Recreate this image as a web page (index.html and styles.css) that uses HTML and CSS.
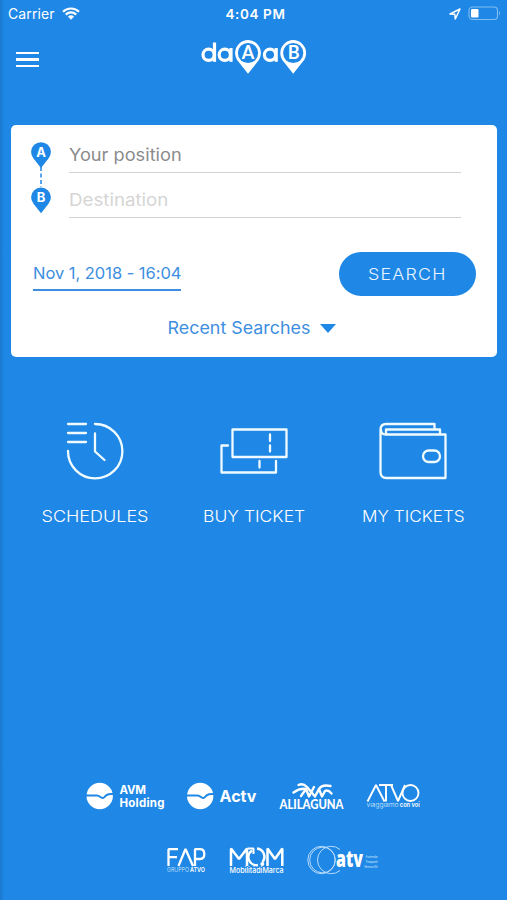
FILE: index.html
```html
<!DOCTYPE html>
<html lang="en">
<head>
    <meta charset="UTF-8">
    <title>daAaB</title>
    <link rel="stylesheet" href="styles.css">
</head>
<body>

<div class="status">
    <div class="carrier">
        <span>Carrier</span>
        <svg width="18" height="13" viewBox="0 0 18 13">
            <path d="M1 4.8 A11.3 11.3 0 0 1 17 4.8 M3.8 7.6 A7.4 7.4 0 0 1 14.2 7.6" fill="none" stroke="#fff" stroke-width="2.2"/>
            <path d="M5.9 9.6 A4.4 4.4 0 0 1 12.1 9.6 L9 12.8 Z" fill="#fff"/>
        </svg>
    </div>
    <span class="clock">4:04 PM</span>
    <div class="power">
        <svg width="12" height="12" viewBox="0 0 12 12">
            <path d="M1 6 L11 1 L6.3 11 L5.8 6.2 Z" fill="none" stroke="#fff" stroke-width="1.5" stroke-linejoin="round"/>
        </svg>
        <svg width="33" height="15" viewBox="0 0 33 15">
            <rect x="1" y="1" width="28.5" height="12.5" rx="3.5" fill="none" stroke="#82bdf2" stroke-width="1.1"/>
            <rect x="3" y="3" width="7.5" height="8.5" rx="1.2" fill="#fff"/>
            <path d="M31 5 Q33 7.2 31 9.5 Z" fill="#82bdf2"/>
        </svg>
    </div>
</div>

<div class="header">
    <div class="menu"><i></i><i></i><i></i></div>
    <svg class="brand" width="110" height="38" viewBox="200 38 110 38">
        <g fill="none" stroke="#fff" stroke-width="3.2">
            <circle cx="208.6" cy="54.8" r="5.6"/>
            <path d="M214.5 42.5 V61.8"/>
            <circle cx="224.8" cy="54.8" r="5.6"/>
            <path d="M231 48 V61.8"/>
            <circle cx="270" cy="54.8" r="5.6"/>
            <path d="M276.2 48 V61.8"/>
        </g>
        <path d="M248 73.7 L238.3 61.5 A12.9 12.9 0 1 1 257.7 61.5 Z" fill="#fff"/>
        <circle cx="248" cy="53" r="10.1" fill="#1f87e5"/>
        <path d="M293.2 73.7 L283.5 61.5 A12.9 12.9 0 1 1 302.9 61.5 Z" fill="#fff"/>
        <circle cx="293.2" cy="53" r="10.1" fill="#1f87e5"/>
        <text class="pin-big" x="248" y="59.4">A</text>
        <text class="pin-big" x="293.6" y="59.4">B</text>
    </svg>
</div>

<form class="search">
    <div class="route">
        <svg class="pins" width="22" height="74" viewBox="0 0 22 74">
            <path d="M11 26 V46" stroke="#1f87e5" stroke-width="1.5" stroke-dasharray="4 2.5"/>
            <path d="M11 27 L3.5 17.5 A9.9 9.9 0 1 1 18.5 17.5 Z" fill="#1f87e5"/>
            <path d="M11 72.3 L3.5 62.8 A9.9 9.9 0 1 1 18.5 62.8 Z" fill="#1f87e5"/>
            <text class="pin" x="11" y="15.7">A</text>
            <text class="pin" x="11" y="61.2">B</text>
        </svg>
        <div class="fields">
            <div class="field"><span class="wide">Your position</span></div>
            <div class="field empty"><span class="wide">Destination</span></div>
        </div>
    </div>
    <div class="when">
        <span class="date">Nov 1, 2018 - 16:04</span>
        <button class="btn" type="button"><span>SEARCH</span></button>
    </div>
    <div class="recent"><span>Recent Searches</span><i class="caret"></i></div>
</form>

<div class="actions">
    <div class="action">
        <svg width="60" height="60" viewBox="65 421 60 60">
            <path d="M68 424 H77 M68 433 H77 M68 442 H77 M77 424 H86 M77 433 H86 M77 442 H86"/>
            <path d="M95 424 A27.2 27.2 0 1 1 68 451 M95 433.5 V451.5 L104.5 460"/>
        </svg>
        <span>SCHEDULES</span>
    </div>
    <div class="action">
        <svg width="70" height="60" viewBox="219 421 70 60">
            <path d="M232.5 429.5 H286.5 V457 H232.5 Z M270 434.5 V441 M270 445.5 V451.5"/>
            <path d="M228 445.5 H221.5 V472.5 H276 V461 M259.5 461 V467.5"/>
        </svg>
        <span class="buy">BUY TICKET</span>
    </div>
    <div class="action">
        <svg width="70" height="60" viewBox="378 421 70 60">
            <path d="M434.5 429 V424 H386 Q380.5 424 380.5 430 V472 Q380.5 478 386.5 478 H445.5 V434.5 H386 Q381 434.5 381 430"/>
            <path d="M386 434 V429.5 H440 V434"/>
            <rect x="423" y="450.5" width="17" height="11.5" rx="5.7"/>
        </svg>
        <span class="mine">MY TICKETS</span>
    </div>
</div>

<div class="partners">
    <div class="line">
        <svg width="80" height="34" viewBox="86 780 80 34">
            <circle cx="99.7" cy="796" r="13.2" fill="#fff"/>
            <path d="M85 795.6 H97 C100.5 795.6 101 799.5 104 797.5 C107 793.5 110 793.8 114 794" fill="none" stroke="#1f87e5" stroke-width="2"/>
            <g class="avm">
                <text x="119.5" y="793.8" textLength="26.5">AVM</text>
                <text x="119.5" y="807" textLength="45">Holding</text>
            </g>
        </svg>
        <svg width="72" height="34" viewBox="186 780 72 34">
            <circle cx="200.2" cy="796" r="13.2" fill="#fff"/>
            <path d="M185.5 795.6 H197.5 C201 795.6 201.5 799.5 204.5 797.5 C207.5 793.5 210.5 793.8 214.5 794" fill="none" stroke="#1f87e5" stroke-width="2"/>
            <text class="actv" x="219.5" y="802.3" textLength="37" lengthAdjust="spacingAndGlyphs">Actv</text>
        </svg>
        <svg class="nudge" width="66" height="34" viewBox="279 780 66 34">
            <g fill="none" stroke="#fff" stroke-width="2.4" stroke-linecap="round" stroke-linejoin="round">
                <path d="M298.5 785 Q303 783 307 787 L315 796.5 L319 789 Q322 784 330.5 786"/>
                <path d="M293.5 792.5 Q300 788 306 789 L309 796.5 L314 787"/>
                <path d="M301 796 L306 789 M319 789 L322 796.5 L325 791 Q328 789.5 331.5 793.5"/>
            </g>
            <text class="alilaguna" x="279.5" y="808.8" textLength="64" lengthAdjust="spacingAndGlyphs">ALILAGUNA</text>
        </svg>
        <svg width="56" height="34" viewBox="365 780 56 34">
            <g fill="none" stroke="#fff" stroke-width="1.9" stroke-linejoin="bevel">
                <path d="M367.5 801.5 L376 785 L384.5 801.5 M379 785 H393 M386 785 V801.5 M391 785 L398 801 L405 785"/>
                <circle cx="410.5" cy="793" r="8"/>
            </g>
            <text class="tiny" x="366.5" y="807.4" textLength="32" lengthAdjust="spacingAndGlyphs">viaggiamo</text>
            <text class="tiny strong" x="399.8" y="807.4" textLength="20" lengthAdjust="spacingAndGlyphs">con voi</text>
        </svg>
    </div>
    <div class="line second">
        <svg width="42" height="34" viewBox="166 843 42 34">
            <path d="M178 849.2 H168.5 V866 M168.5 857.2 H177 M178.5 866 L185.5 849 L193 866 M195 866 V849.2 H200 Q204.3 849.2 204.3 854 Q204.3 859 200 859 H195" fill="none" stroke="#fff" stroke-width="2.3" stroke-linejoin="bevel"/>
            <text class="tiny" x="167" y="871.6" textLength="22" lengthAdjust="spacingAndGlyphs">GRUPPO</text>
            <text class="tiny strong" x="190" y="871.6" textLength="15" lengthAdjust="spacingAndGlyphs">ATVO</text>
        </svg>
        <svg width="56" height="34" viewBox="229 843 56 34">
            <g fill="none" stroke="#fff" stroke-width="2.5" stroke-linejoin="bevel">
                <path d="M231 866 V848.5 L239 859 L247 848.5 V866"/>
                <path d="M267.5 866 V848.5 L275 859 L282.3 848.5 V866"/>
                <path d="M252 850.5 A8 8 0 0 0 258 865 M257 848.5 A8.3 8.3 0 0 1 262.5 862"/>
                <path d="M247.5 848.5 H253.5 V854" stroke-width="2"/>
            </g>
            <circle cx="262.3" cy="864" r="2" fill="#fff"/>
            <text class="mobility" x="229.5" y="872.8" textLength="54" lengthAdjust="spacingAndGlyphs">MobilitàdiMarca</text>
        </svg>
        <svg class="nudge" width="73" height="34" viewBox="307 843 73 34">
            <g fill="none" stroke="#b8dcfb" stroke-width="1">
                <circle cx="321.5" cy="860" r="13.7"/>
                <circle cx="322.5" cy="860" r="12.8"/>
                <path d="M340 849.5 A13.7 13.7 0 1 0 340 870.5"/>
            </g>
            <text class="atv" x="336" y="867.3" textLength="27" lengthAdjust="spacingAndGlyphs">atv</text>
            <g class="micro">
                <text x="365.5" y="858" textLength="12">Azienda</text>
                <text x="365.5" y="862.8" textLength="12">Trasporti</text>
                <text x="364" y="867.6" textLength="13.5">Verona Srl</text>
            </g>
        </svg>
    </div>
</div>

</body>
</html>
```

FILE: styles.css
```css
* {
    box-sizing: border-box;
}

body {
    margin: 0;
    height: 900px;
    overflow: hidden;
    display: flex;
    flex-direction: column;
    background: linear-gradient(90deg, #1b78cf 0, #1f87e5 4px);
    color: #fff;
    font-family: Inter, "Open Sans", sans-serif;
}

svg {
    display: block;
    overflow: visible;
}

.status {
    display: grid;
    grid-template-columns: 1fr auto 1fr;
    align-items: center;
    height: 27px;
    padding: 0 6px 0 8px;
    font-size: 14px;
}

.carrier {
    display: flex;
    align-items: center;
    gap: 7px;
    letter-spacing: 0.1px;
}

.clock {
    font-weight: 600;
    font-size: 13.5px;
    letter-spacing: 0.6px;
    padding-left: 2px;
}

.power {
    display: flex;
    justify-content: flex-end;
    align-items: center;
    gap: 7px;
}

.header {
    display: grid;
    grid-template-columns: 184px 110px 1fr;
    height: 98px;
    padding: 11px 16px 0;
}

.menu {
    display: flex;
    flex-direction: column;
    gap: 4px;
    width: 23px;
    padding-top: 14px;
}

.menu i {
    height: 2.4px;
    background: #fff;
}

.pin-big {
    font: 700 18px Lato, sans-serif;
    text-anchor: middle;
    fill: #fff;
}

.search {
    height: 232px;
    margin: 0 10px 0 11px;
    padding: 16px 21px 0 19px;
    background: #fff;
    border-radius: 5px;
    color: #3d8ee0;
    font-size: 17px;
}

.route {
    display: flex;
    gap: 17px;
}

.pin {
    font: 700 13px Inter, sans-serif;
    text-anchor: middle;
    fill: #fff;
}

.fields {
    width: 392px;
}

.field {
    height: 32px;
    padding-top: 3px;
    line-height: 22px;
    border-bottom: 1px solid #d2d2d2;
    color: #8b8b8b;
}

.empty {
    height: 45px;
    padding-top: 16px;
    color: #d5d5d5;
}

/* the labels are a bit wider than the font */
.wide {
    display: inline-block;
    transform: scaleX(1.07);
    transform-origin: left;
}

.empty .wide {
    transform: scaleX(1.1);
}

.when {
    display: flex;
    justify-content: space-between;
    align-items: center;
    height: 44px;
    margin-top: 34px;
    padding-left: 3px;
}

.date {
    height: 29px;
    line-height: 23px;
    border-bottom: 2px solid #3d8ee0;
    margin-top: 5px;
    font-size: 16.5px;
    letter-spacing: -0.03px;
}

.btn {
    width: 137px;
    height: 44px;
    border: none;
    border-radius: 22px;
    background: #1f87e5;
    color: #e8f4ff;
    font: 300 16.5px Inter, sans-serif;
    letter-spacing: 1.1px;
}

.btn span {
    display: inline-block;
    transform: scaleX(1.08);
}

.recent {
    display: flex;
    justify-content: center;
    align-items: center;
    gap: 13px;
    margin-top: 22px;
    padding-left: 1px;
}

.recent span {
    display: inline-block;
    transform: scaleX(1.05);
}

.caret {
    border: 8px solid transparent;
    border-top: 9px solid #1f87e5;
    border-bottom: none;
}

.actions {
    display: grid;
    grid-template-columns: 158px 160px 158px;
    margin: 64px 0 0 16px;
    font-size: 16.5px;
    font-weight: 300;
}

.action {
    display: flex;
    flex-direction: column;
    align-items: center;
    gap: 25px;
}

.action span {
    display: inline-block;
    transform: scaleX(1.09);
}

.action .buy {
    transform: scaleX(1.06);
}

.action .mine {
    transform: scaleX(1.04);
}

.action svg {
    fill: none;
    stroke: #f0fbff;
    stroke-width: 2.3;
    stroke-linecap: round;
    stroke-linejoin: round;
}

.partners {
    display: flex;
    flex-direction: column;
    gap: 29px;
    margin-top: auto;
    padding-bottom: 23px;
}

.line {
    display: flex;
    gap: 20px;
    padding-left: 86px;
}

.second {
    gap: 21px;
    padding-left: 166px;
}

.nudge {
    margin-left: 1px;
}

.avm {
    font: 700 11.5px Inter, sans-serif;
    fill: #fff;
}

.actv {
    font: 700 16.5px Inter, sans-serif;
    fill: #fff;
}

.alilaguna {
    font: 900 12.5px Lato, sans-serif;
    fill: #fff;
}

.tiny {
    font: 300 6.5px Inter, sans-serif;
    fill: #d7ecff;
}

.strong {
    font-weight: 600;
    fill: #fff;
}

.mobility {
    font: 500 7.5px Inter, sans-serif;
    fill: #fff;
}

.atv {
    font: 800 22px "Open Sans", sans-serif;
    fill: #fff;
}

.micro {
    font: 3.2px Inter, sans-serif;
    fill: #cbe6ff;
}
```
